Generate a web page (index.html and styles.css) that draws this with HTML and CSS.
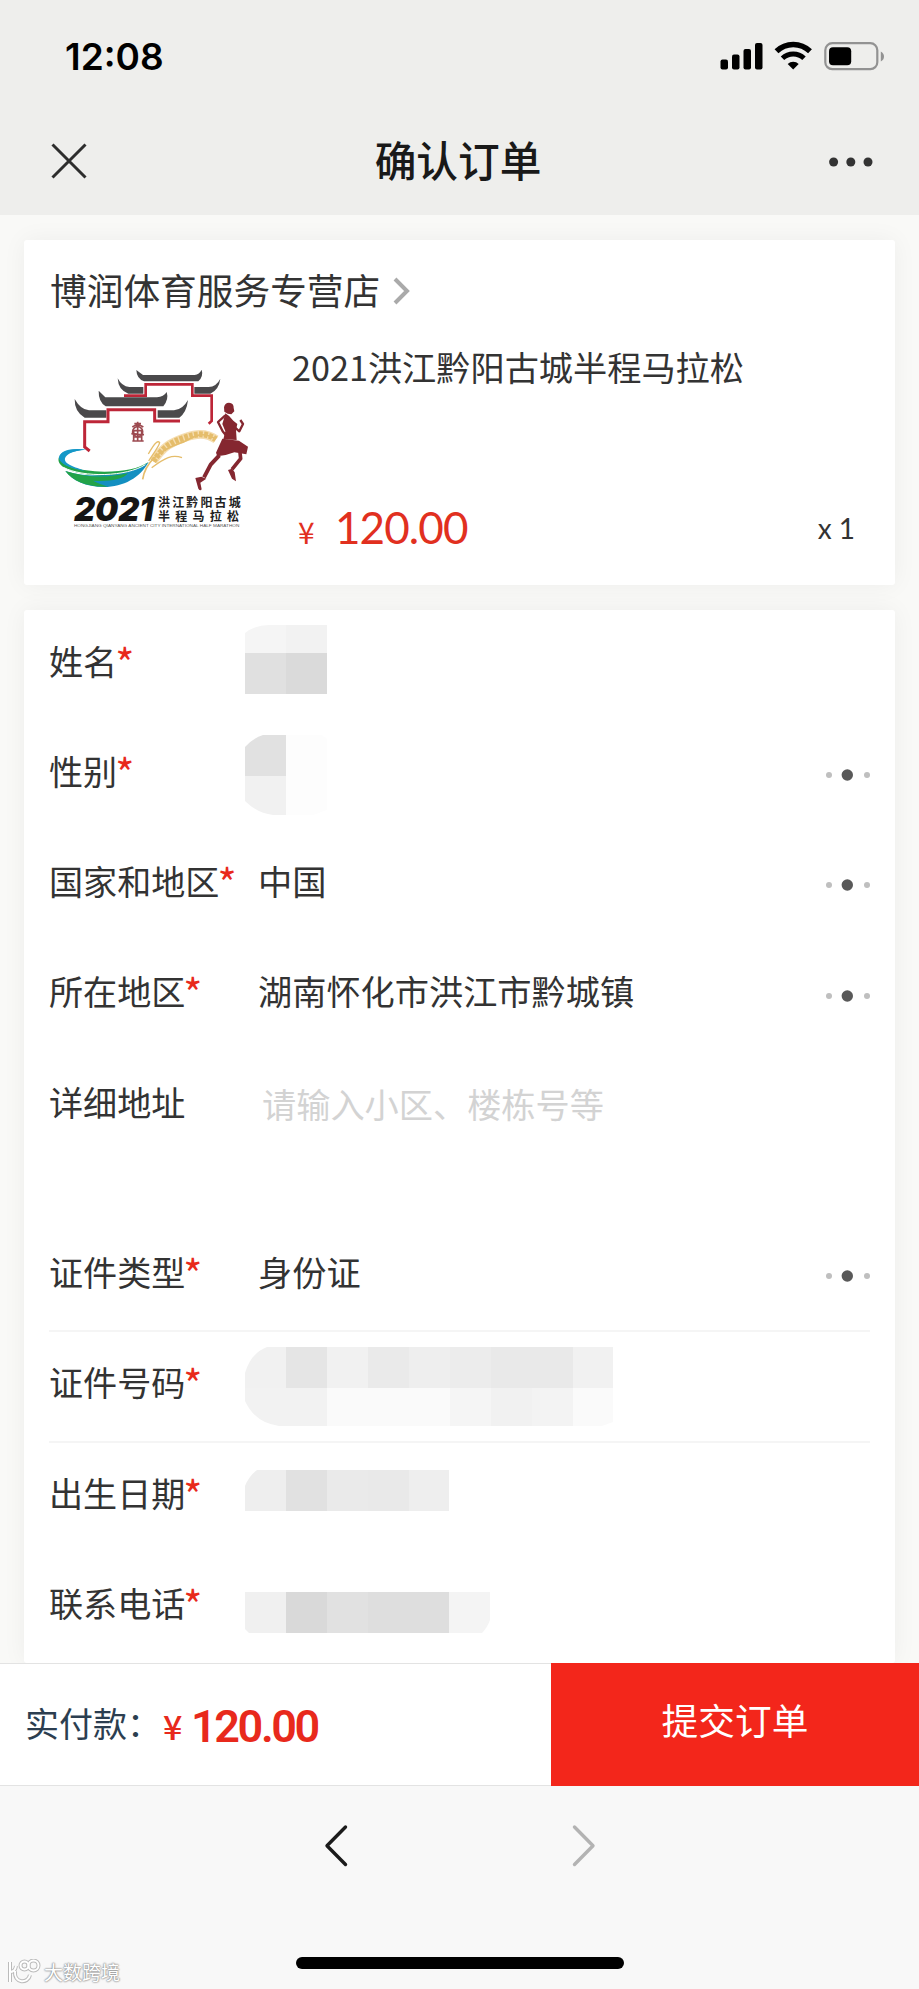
FILE: index.html
```html
<!DOCTYPE html>
<html lang="zh-CN">
<head>
    <meta charset="UTF-8">
    <meta name="viewport" content="width=device-width, initial-scale=1.0">
    <title>确认订单</title>
    <link rel="stylesheet" href="styles.css">
</head>
<body>
    <header class="header">
        <div class="status">
            <span class="time">12:08</span>
            <svg class="status-icons" width="166" height="30" viewBox="0 0 166 30">
                <rect x="0.5" y="18.5" width="7.5" height="10" rx="2"/>
                <rect x="12" y="13.5" width="7.5" height="15" rx="2"/>
                <rect x="23.5" y="8" width="7.5" height="20.500" rx="2"/>
                <rect x="35" y="2" width="7.500" height="26.500" rx="2"/>
                <g fill="none" stroke="#000">
                    <path d="M56.500 10.200a24 24 0 0 1 33.500 0" stroke-width="5.500"/>
                    <path d="M62.500 17.300a15.500 15.500 0 0 1 21.500 0" stroke-width="5"/>
                </g>
                <path d="M73.200 28.500l-5.500-5.600a8 8 0 0 1 11 0z"/>
                <rect x="105.300" y="2.200" width="52" height="26" rx="7" fill="none" stroke="#929292" stroke-width="2.200"/>
                <rect x="109" y="6.200" width="22.200" height="18" rx="4"/>
                <path d="M160.800 10.500c4.300 2 4.300 8 0 10z" fill="#929292"/>
            </svg>
        </div>
        <div class="titlebar">
            <svg class="close" width="36" height="36" viewBox="0 0 36 36"><path d="M1.500 1.500l33 33M34.500 1.500l-33 33"/></svg>
            <h1>确认订单</h1>
            <svg class="more" width="44" height="10" viewBox="0 0 44 10"><circle cx="4.600" cy="5" r="4.500"/><circle cx="21.800" cy="5" r="4.500"/><circle cx="39" cy="5" r="4.500"/></svg>
        </div>
    </header>

    <main class="content">
        <section class="card order">
            <a class="shop">博润体育服务专营店<svg width="18" height="28" viewBox="0 0 18 28"><path d="M2 2l12 12L2 26"/></svg></a>
            <div class="product">
                <svg class="logo" width="220" height="200" viewBox="30 0 660 600">
                    <!-- back gate -->
                    <path d="M289 60l20 15h155q14-2 21-16 6 20-10 35H312q-22-8-23-34z" fill="#4a494b"/>
                    <path d="M233 85q12 24 35 26h42v20h-45q-30-10-32-46zM541 86q-12 24-35 25h-43v20h48q26-12 30-45z" fill="#4a494b"/>
                    <path d="M252 137h65v-34h140v34h58v76l-9 8" fill="none" stroke="#bd2638" stroke-width="8"/>
                    <!-- front gate -->
                    <path d="M176 122l20 20h155q20-1 29-16 7 22-10 43H197q-22-14-21-47z" fill="#4a494b"/>
                    <path d="M104 147q18 32 43 34h52v22h-65q-31-18-30-56zM444 150q-16 29-42 31h-49v22h65q22-16 26-53z" fill="#4a494b"/>
                    <path d="M420 213h-76v-34H204v36h-70v76l15 12" fill="none" stroke="#bd2638" stroke-width="9"/>
                    <!-- seal -->
                    <g fill="none" stroke="#9c4a50" stroke-width="5">
                        <path d="M293 215v59M283 221h20M277 231q16-12 33 0M278 242h31M274 251l38 3M281 261h25M281 243v29M305 243v29M277 273h34"/>
                        <circle cx="293" cy="245" r="15"/>
                    </g>
                    <!-- river -->
                    <path d="M137 299c-55-6-83 10-80 29 8 30 60 42 100 42-50-12-92-24-88-44 3-14 28-23 68-27z" fill="#1598c8"/>
                    <path d="M57 321c1 27 58 42 136 44 61 0 104-9 132-29-28 34-95 46-153 41C98 371 45 351 57 321z" fill="#22a348"/>
                    <path d="M137 299c-52-8-86 8-78 30 8 16 40 28 78 34-34-12-66-20-62-38 4-14 28-24 62-26z" fill="#1598c8"/>
                    <path d="M76 363c80 27 205 12 250-27-25 47-76 75-134 75-55 0-95-20-116-48z" fill="#138fc1"/>
                    <path d="M76 363c70 22 130 20 188 7-14 19-63 26-105 22 15 8 27 12 44 18-62 2-105-17-127-47z" fill="#22a348"/>
                    <path d="M70 352c60 32 190 28 246-8" fill="none" stroke="#fff" stroke-width="3"/>
                    <!-- wheat -->
                    <g fill="none" stroke="#e5bd6b">
                        <path d="M340 334c30-44 54-58 96-72 30-10 60-16 92 6" stroke="#f5ddb0" stroke-width="26"/>
                        <path d="M308 388c8-49 43-84 112-108 38-13 55-42 106-14" stroke-width="5"/>
                        <path d="M335 353c40-30 62-41 91-30M326 333c8-14 30-41 33-55-5-6-12-5-34 34" stroke-width="4"/>
                        <path d="M340 334c30-44 54-58 96-72 30-10 60-16 92 6" stroke-width="18" stroke-dasharray="11 4"/>
                    </g>
                    <!-- runner -->
                    <g fill="#852730">
                        <path d="M552 172q2-14 15-14 15 1 14 16l2 10-9 9-11-2-10-6z"/>
                        <path d="M556 190q14 8 24 22l12 10-4 18 2 30-40-2 6-24-9-22 6-20z"/>
                        <path d="M547 266l50 6 27 18-5 23-36-6-26 8-25 4-4-11z"/>
                        <path d="M484 380l-18 4 9 32q6 9 10 2l-4-20 18-12zM576 356l-12 4 12 26 12 8-4-27z"/>
                    </g>
                    <g fill="none" stroke="#852730" stroke-linejoin="round">
                        <path d="M556 196l-22 20 14 28 18 22" stroke-width="7"/>
                        <path d="M582 230l16 14 11-22-8-12" stroke-width="7"/>
                        <path d="M538 316l-26 28-20 38" stroke-width="12"/>
                        <path d="M600 308l2 18-26 32" stroke-width="11"/>
                    </g>
                    <text class="logo-year" x="102" y="514" textLength="240" lengthAdjust="spacingAndGlyphs">2021</text>
                    <text class="logo-name" x="354" y="472" textLength="248">洪江黔阳古城</text>
                    <text class="logo-name" x="354" y="512" textLength="243">半程马拉松</text>
                    <text class="logo-en" x="102" y="531" textLength="496" lengthAdjust="spacingAndGlyphs">HONGJIANG QIANYANG ANCIENT CITY INTERNATIONAL HALF MARATHON</text>
                </svg>
                <div class="info">
                    <h2>2021洪江黔阳古城半程马拉松</h2>
                    <div class="price-line">
                        <span class="yen">¥</span>
                        <span class="price">120.00</span>
                        <span class="count">x 1</span>
                    </div>
                </div>
            </div>
        </section>

        <section class="card form">
            <div class="row">
                <label>姓名<i>*</i></label>
                <svg class="mask" width="82" height="69" viewBox="0 0 82 69">
                    <path d="M0 8Q10 0 24 0h17v28H0z" fill="#f5f5f5"/><path d="M41 0h41v28H41z" fill="#f2f2f2"/>
                    <path d="M0 28h41v41H0z" fill="#e0e0e0"/><path d="M41 28h41v41H41z" fill="#dadada"/>
                </svg>
            </div>
            <div class="row">
                <label>性别<i>*</i></label>
                <svg class="mask" width="82" height="80" viewBox="0 0 82 80">
                    <path d="M0 12Q8 3 18 0h23v41H0z" fill="#e1e1e1"/><path d="M0 41h41v39H28Q12 78 0 66z" fill="#f1f1f1"/>
                    <path d="M41 0h35l6 4v71l-14 5H41z" fill="#fdfdfd"/>
                </svg>
                <svg class="picker" width="42" height="12" viewBox="0 0 42 12"><circle cx="4" cy="6" r="3"/><circle cx="22.300" cy="6" r="5.700"/><circle cx="42" cy="6" r="3"/></svg>
            </div>
            <div class="row">
                <label>国家和地区<i>*</i></label>
                <span class="value">中国</span>
                <svg class="picker" width="42" height="12" viewBox="0 0 42 12"><circle cx="4" cy="6" r="3"/><circle cx="22.300" cy="6" r="5.700"/><circle cx="42" cy="6" r="3"/></svg>
            </div>
            <div class="row">
                <label>所在地区<i>*</i></label>
                <span class="value">湖南怀化市洪江市黔城镇</span>
                <svg class="picker" width="42" height="12" viewBox="0 0 42 12"><circle cx="4" cy="6" r="3"/><circle cx="22.300" cy="6" r="5.700"/><circle cx="42" cy="6" r="3"/></svg>
            </div>
            <div class="row row-address">
                <label>详细地址</label>
                <span class="value placeholder">请输入小区、楼栋号等</span>
            </div>
            <div class="row line">
                <label>证件类型<i>*</i></label>
                <span class="value">身份证</span>
                <svg class="picker" width="42" height="12" viewBox="0 0 42 12"><circle cx="4" cy="6" r="3"/><circle cx="22.300" cy="6" r="5.700"/><circle cx="42" cy="6" r="3"/></svg>
            </div>
            <div class="row line">
                <label>证件号码<i>*</i></label>
                <svg class="mask" width="368" height="79" viewBox="0 0 368 79">
                    <path d="M0 26Q6 6 22 0h19v41H0z" fill="#f1f1f1"/>
                    <path d="M41 0h41v41H41z" fill="#e5e5e5"/><path d="M82 0h41v41H82z" fill="#f1f1f1"/>
                    <path d="M123 0h41v41h-41z" fill="#eaeaea"/><path d="M164 0h41v41h-41z" fill="#eee"/>
                    <path d="M205 0h41v41h-41z" fill="#ececec"/><path d="M246 0h82v41h-82z" fill="#e9e9e9"/>
                    <path d="M328 0h40v41h-40z" fill="#f1f1f1"/>
                    <path d="M0 41h82v38H34Q10 76 0 54z" fill="#f2f2f2"/><path d="M82 41h123v38H82z" fill="#fafafa"/>
                    <path d="M205 41h41v38h-41z" fill="#f5f5f5"/><path d="M246 41h41v38h-41z" fill="#f1f1f1"/>
                    <path d="M287 41h41v38h-41z" fill="#f3f3f3"/><path d="M328 41h40v34l-11 4h-29z" fill="#fafafa"/>
                </svg>
            </div>
            <div class="row">
                <label>出生日期<i>*</i></label>
                <svg class="mask mask-birth" width="204" height="41" viewBox="0 0 204 41">
                    <path d="M0 16Q4 6 12 0h29v41H0z" fill="#eee"/><path d="M41 0h41v41H41z" fill="#e1e1e1"/>
                    <path d="M82 0h41v41H82z" fill="#eaeaea"/><path d="M123 0h41v41h-41z" fill="#e9e9e9"/><path d="M164 0h40v41h-40z" fill="#eee"/>
                </svg>
            </div>
            <div class="row">
                <label>联系电话<i>*</i></label>
                <svg class="mask mask-phone" width="245" height="41" viewBox="0 0 245 41">
                    <path d="M0 0h41v41H4L0 37z" fill="#f0f0f0"/><path d="M41 0h41v41H41z" fill="#d9d9d9"/>
                    <path d="M82 0h41v41H82z" fill="#e1e1e1"/><path d="M123 0h81v41h-81z" fill="#dedede"/>
                    <path d="M204 0h41v28q-3 8-8 13h-33z" fill="#f4f4f4"/>
                </svg>
            </div>
        </section>
    </main>

    <div class="paybar">
        <div class="total">
            <span class="total-label">实付款：</span>
            <span class="total-yen">¥</span>
            <span class="total-price">120.00</span>
        </div>
        <button type="button" class="submit">提交订单</button>
    </div>

    <footer class="nav">
        <div class="arrows">
            <svg width="24" height="44" viewBox="0 0 24 44"><path d="M21.500 3L3 21.800l18.500 18.700" stroke="#1b1b1b"/></svg>
            <svg width="24" height="44" viewBox="0 0 24 44"><path d="M2.500 3L21 21.800 2.500 40.500" stroke="#b3b3b3"/></svg>
        </div>
        <div class="home-bar"></div>
        <div class="watermark">
            <svg width="34" height="26" viewBox="0 0 34 26">
                <g class="mark-edge"><path d="M3 3v20M3 13q5 0 6-6M8 12c-1 13 13 13 15 4"/><circle cx="17.500" cy="6.500" r="4"/><circle cx="26.500" cy="6.500" r="5"/></g>
                <g class="mark-line"><path d="M3 3v20M3 13q5 0 6-6M8 12c-1 13 13 13 15 4"/><circle cx="17.500" cy="6.500" r="4"/><circle cx="26.500" cy="6.500" r="5"/></g>
            </svg>
            <span>大数跨境</span>
        </div>
    </footer>
</body>
</html>
```

FILE: styles.css
```css
* {
    box-sizing: border-box;
}

body {
    margin: 0;
    height: 1989px;
    display: flex;
    flex-direction: column;
    overflow: hidden;
    font-family: 'Noto Sans CJK SC', sans-serif;
    background: #f9f9f7;
    color: #333;
}

svg {
    display: block;
    flex: none;
}

h1, h2 {
    margin: 0;
}

.header {
    height: 215px;
    flex: none;
    background: #eeeeec;
}

.status {
    height: 112px;
    padding: 0 33px 0 65px;
    display: flex;
    align-items: center;
    justify-content: space-between;
}

.time {
    font-family: 'Inter', sans-serif;
    font-size: 37px;
    font-weight: 600;
    color: #000;
}

.titlebar {
    height: 98px;
    padding: 0 46px 0 51px;
    display: flex;
    align-items: center;
    justify-content: space-between;
}

.titlebar h1 {
    font-size: 41.7px;
    font-weight: 500;
    line-height: 60px;
    color: #191919;
    margin-top: -4px;
}

.close {
    fill: none;
    stroke: #2d2d2d;
    stroke-width: 3;
}

.more {
    margin-top: 1px;
    fill: #333;
}

.content {
    height: 1448px;
    flex: none;
    padding: 25px 24px 0;
    overflow: hidden;
}

.card {
    background: #fff;
    border-radius: 3px;
    box-shadow: 0 0 24px rgba(0, 0, 0, 0.05);
    padding: 0 25px;
}

.order {
    height: 345px;
    margin-bottom: 25px;
    padding-left: 26px;
}

.shop {
    display: flex;
    align-items: center;
    height: 110px;
    padding-bottom: 12px;
    font-size: 36.7px;
}

.shop svg {
    margin: 4px 0 0 13px;
    fill: none;
    stroke: #aaa;
    stroke-width: 4;
}

.product {
    display: flex;
}

.info {
    flex: 1;
    margin-left: 22px;
    display: flex;
    flex-direction: column;
    justify-content: space-between;
    height: 206px;
}

.info h2 {
    font-size: 34.2px;
    font-weight: 400;
    line-height: 32px;
}

.price-line {
    display: flex;
    align-items: baseline;
    line-height: 50px;
    color: #e1301f;
}

.yen {
    width: 43px;
    padding-left: 6px;
    font-size: 30px;
}

.price {
    font-family: 'Lato', sans-serif;
    font-size: 44px;
    letter-spacing: -0.9px;
}

.count {
    margin: 1px 0 0 auto;
    padding-right: 15px;
    align-self: flex-start;
    font-family: 'Lato', sans-serif;
    font-size: 28px;
    color: #333;
}

.row {
    height: 110.2px;
    display: flex;
    align-items: center;
}

.row label {
    width: 196px;
    flex: none;
    padding-bottom: 11px;
    font-size: 34.1px;
    line-height: 50px;
    white-space: nowrap;
}

.row label i {
    display: inline-block;
    height: 50px;
    margin-left: -2px;
    vertical-align: top;
    font-size: 41px;
    line-height: 53px;
    font-style: normal;
    color: #e8291c;
}

.line {
    border-bottom: 2px solid #f5f5f5;
}

.row-address {
    height: 171.500px;
    padding-bottom: 61px;
}

.value {
    padding: 0 0 11px 13px;
    font-size: 34.2px;
    line-height: 50px;
}

.placeholder {
    padding: 0 0 7px 17px;
    color: #d3d3d3;
}

.picker {
    margin-left: auto;
    overflow: visible;
    fill: #bfbfbf;
    margin-right: 3px;
}

.picker circle:nth-child(2) {
    fill: #595959;
}

.mask {
    align-self: flex-start;
    margin-top: 15px;
}

.mask-birth {
    margin-top: 27px;
}

.mask-phone {
    margin-top: 39px;
}

.logo-year {
    font: italic 900 97px 'Inter', sans-serif;
    fill: #151515;
}

.logo-name {
    font: 700 36px 'Noto Sans CJK SC', sans-serif;
    fill: #222;
}

.logo-en {
    font: 12px 'Liberation Sans', sans-serif;
    fill: #555;
}

.paybar {
    height: 123px;
    flex: none;
    display: flex;
}

.total {
    width: 551px;
    padding-left: 25px;
    display: flex;
    align-items: center;
    background: #fff;
    border-top: 1px solid #e3e3e3;
    border-bottom: 1px solid #e3e3e3;
}

.total-label {
    width: 138px;
    padding-bottom: 5px;
    font-size: 34px;
    color: #2c3e50;
}

.total-yen {
    width: 28px;
    padding-top: 1px;
    font-size: 34px;
    font-weight: 500;
    color: #e8291c;
}

.total-price {
    padding-top: 3px;
    font-family: 'Roboto', sans-serif;
    font-size: 45px;
    font-weight: 600;
    letter-spacing: -2.4px;
    color: #e8291c;
}

.submit {
    flex: 1;
    padding: 0 0 11px;
    border: none;
    background: #f3261b;
    color: #fff;
    font-family: inherit;
    font-size: 36.7px;
}

.nav {
    flex: 1;
    position: relative;
    background: #f8f8f8;
}

.arrows {
    display: flex;
    justify-content: center;
    gap: 224px;
    padding-top: 38px;
}

.arrows svg {
    fill: none;
    stroke-width: 3.4;
    stroke-linecap: round;
    stroke-linejoin: round;
}

.home-bar {
    width: 328px;
    height: 12px;
    margin: 89px auto 0;
    border-radius: 6px;
    background: #000;
}

/* sits over the page corner */
.watermark {
    position: absolute;
    left: 7px;
    bottom: 4px;
    display: flex;
    align-items: center;
    gap: 3px;
    font-size: 19px;
    line-height: 26px;
    color: #fff;
    text-shadow: 0 0 2px #888, 0 0 2px #999, 0 0 1px #999;
}

.mark-edge,
.mark-line {
    fill: none;
    stroke: #bbb;
    stroke-width: 4;
}

.mark-line {
    stroke: #fff;
    stroke-width: 2;
}
```
